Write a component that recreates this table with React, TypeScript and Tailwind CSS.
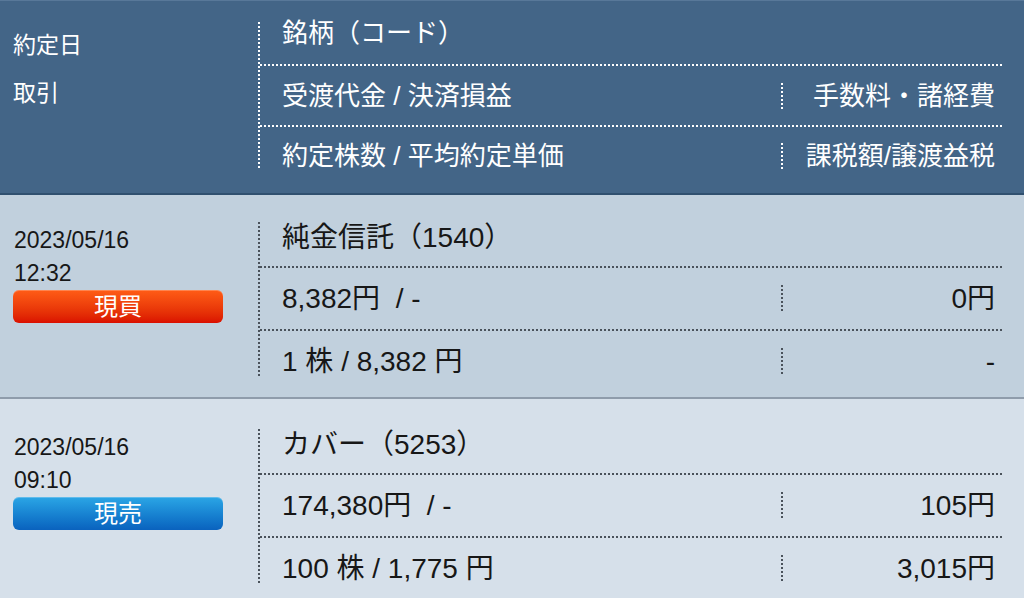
import React from "react";

const FONT = "font-['Liberation_Sans','Noto_Sans_CJK_JP',sans-serif]";

function HLine({ light }: { light: boolean }) {
  return (
    <div
      className={
        light
          ? "h-[2px] shrink-0 bg-[repeating-linear-gradient(90deg,#ffffff_0_2px,transparent_2px_4px)]"
          : "h-[2px] shrink-0 bg-[repeating-linear-gradient(90deg,#4a525b_0_2px,transparent_2px_4px)]"
      }
    />
  );
}

function VLine({ light, className }: { light: boolean; className: string }) {
  return (
    <div
      className={
        (light
          ? "w-[2px] shrink-0 bg-[repeating-linear-gradient(180deg,#ffffff_0_2px,transparent_2px_4px)] "
          : "w-[2px] shrink-0 bg-[repeating-linear-gradient(180deg,#4a525b_0_2px,transparent_2px_4px)] ") + className
      }
    />
  );
}

function HeaderCols() {
  return (
    <div className="flex h-[195px] bg-[#436587] border-t border-t-[#587899] border-b-2 border-b-[#30506f] text-white">
      <div className="w-[258px] shrink-0 pl-[13px] pt-[20px] text-[23px] leading-[48px]">
        <div>約定日</div>
        <div>取引</div>
      </div>
      <div className="mt-[21px] h-[147px] w-[745px] flex">
        <VLine light={true} className="h-full" />
        <div className="flex-1 flex flex-col text-[26px]">
          <div className="h-[42px] pl-[22px] leading-[22px]">銘柄（コード）</div>
          <HLine light={true} />
          <div className="h-[59px] flex items-center">
            <div className="flex-1 pl-[22px] leading-[26px]">受渡代金 / 決済損益</div>
            <VLine light={true} className="h-[26px]" />
            <div className="w-[220px] text-right pr-[8px] leading-[26px]">手数料・諸経費</div>
          </div>
          <HLine light={true} />
          <div className="flex-1 flex items-end">
            <div className="flex-1 pl-[22px] leading-[26px]">約定株数 / 平均約定単価</div>
            <VLine light={true} className="h-[26px]" />
            <div className="w-[220px] text-right pr-[8px] leading-[26px]">課税額/譲渡益税</div>
          </div>
        </div>
      </div>
    </div>
  );
}

type RowProps = {
  bg: string;
  pt: string;
  date: string;
  time: string;
  sell: boolean;
  name: string;
  amount: string;
  fee: string;
  qty: string;
  tax: string;
};

function Row({ bg, pt, date, time, sell, name, amount, fee, qty, tax }: RowProps) {
  return (
    <div className={`flex h-[204px] ${bg} ${pt} border-b-2 border-[#8f9cab] text-[#171717]`}>
      <div className="w-[258px] shrink-0 pl-[13px] pt-[29px]">
        <div className="pl-[1px] text-[23px] leading-[33px]">{date}</div>
        <div className="pl-[1px] text-[23px] leading-[33px]">{time}</div>
        <div
          className={
            sell
              ? "w-[210px] h-[33px] rounded-[6px] bg-gradient-to-b from-[#2ba6e6] to-[#0a62be] text-white text-[24px] leading-[33px] text-center shadow-[inset_0_1px_0_rgba(255,255,255,0.25)]"
              : "w-[210px] h-[33px] rounded-[6px] bg-gradient-to-b from-[#ff5c16] to-[#da0e00] text-white text-[24px] leading-[33px] text-center shadow-[inset_0_1px_0_rgba(255,255,255,0.25)]"
          }
        >
          {sell ? "現売" : "現買"}
        </div>
      </div>
      <div className="mt-[27px] h-[155px] w-[745px] flex">
        <VLine light={false} className="h-full" />
        <div className="flex-1 flex flex-col text-[28px]">
          <div className="h-[44px] pl-[22px] pt-[1px] leading-[30px]">{name}</div>
          <HLine light={false} />
          <div className="h-[61px] flex items-center">
            <div className="flex-1 pl-[22px] leading-[30px]">{amount}</div>
            <VLine light={false} className="h-[28px]" />
            <div className="w-[220px] text-right pr-[8px] leading-[30px]">{fee}</div>
          </div>
          <HLine light={false} />
          <div className="flex-1 flex items-end">
            <div className="flex-1 pl-[22px] leading-[30px]">{qty}</div>
            <VLine light={false} className="h-[28px] mb-[1px]" />
            <div className="w-[220px] text-right pr-[8px] leading-[30px]">{tax}</div>
          </div>
        </div>
      </div>
    </div>
  );
}

export default function App() {
  return (
    <div className={`w-[1024px] h-[598px] overflow-hidden ${FONT}`}>
      <HeaderCols />
      <Row
        bg="bg-[#c1d0dd]"
        pt="pt-0"
        date="2023/05/16"
        time="12:32"
        sell={false}
        name="純金信託（1540）"
        amount={"8,382円\u00a0 / -"}
        fee="0円"
        qty="1 株 / 8,382 円"
        tax="-"
      />
      <Row
        bg="bg-[#d6e0ea]"
        pt="pt-[3px]"
        date="2023/05/16"
        time="09:10"
        sell={true}
        name="カバー（5253）"
        amount={"174,380円\u00a0 / -"}
        fee="105円"
        qty="100 株 / 1,775 円"
        tax="3,015円"
      />
    </div>
  );
}
